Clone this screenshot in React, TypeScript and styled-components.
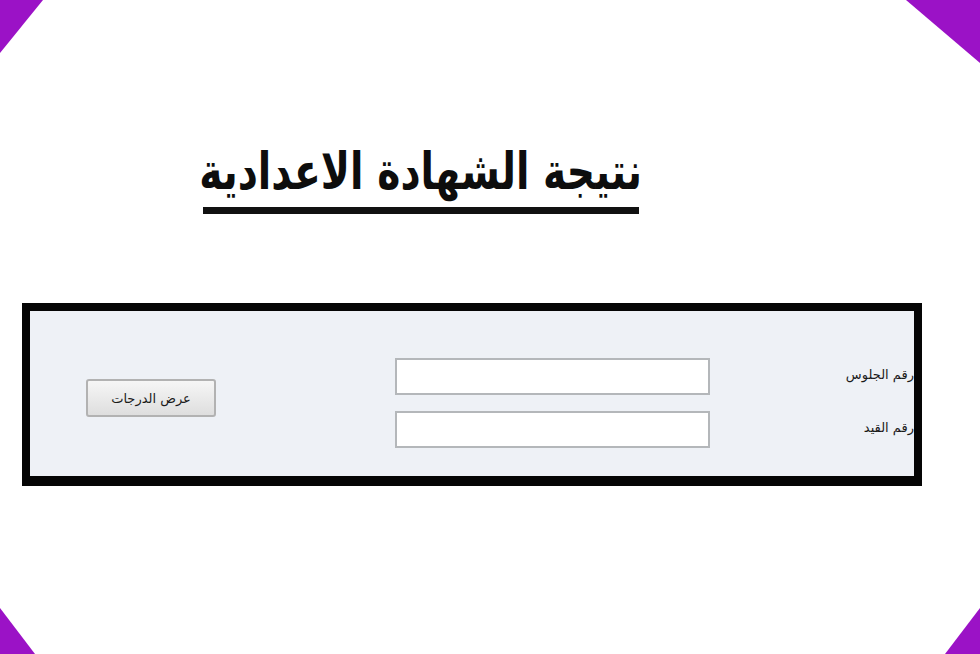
import React from "react";
import styled, { createGlobalStyle } from "styled-components";

const GlobalStyle = createGlobalStyle`
  html, body {
    margin: 0;
    padding: 0;
    background: #ffffff;
  }
  body {
    font-family: "DejaVu Sans", "Noto Sans", sans-serif;
  }
`;

export default function App() {
  return (
    <>
      <GlobalStyle />
      <Page>
        <Corner $pos="tl" />
        <Corner $pos="tr" />
        <Corner $pos="bl" />
        <Corner $pos="br" />

        <TitleRow>
          <Title dir="rtl">
            <TitleText>نتيجة الشهادة الاعدادية</TitleText>
          </Title>
        </TitleRow>

        <Box dir="rtl">
          <Fields>
            <Label>رقم الجلوس</Label>
            <Input type="text" />
            <Label>رقم القيد</Label>
            <Input type="text" />
          </Fields>
          <Button type="button">عرض الدرجات</Button>
        </Box>
      </Page>
    </>
  );
}

const Page = styled.div`
  position: relative;
  width: 980px;
  height: 654px;
  overflow: hidden;
  background: #ffffff;
  padding-top: 137px;
  box-sizing: border-box;
`;

const corners = {
  tl: "top: 0; left: 0; width: 43px; height: 53px; clip-path: polygon(0 0, 100% 0, 0 100%);",
  tr: "top: 0; right: 0; width: 74px; height: 63px; clip-path: polygon(0 0, 100% 0, 100% 100%);",
  bl: "bottom: 0; left: 0; width: 35px; height: 46px; clip-path: polygon(0 0, 100% 100%, 0 100%);",
  br: "bottom: 0; right: 0; width: 35px; height: 46px; clip-path: polygon(100% 0, 100% 100%, 0 100%);",
};

const Corner = styled.div<{ $pos: keyof typeof corners }>`
  position: absolute;
  background: #9b12c6;
  ${(p) => corners[p.$pos]}
`;

const TitleRow = styled.div`
  padding-left: 203px;
  height: 166px;
`;

const Title = styled.h1`
  display: flex;
  justify-content: center;
  margin: 0;
  width: 436px;
  height: 70px;
  border-bottom: 7px solid #111111;
  white-space: nowrap;
`;

const TitleText = styled.span`
  display: inline-block;
  font-family: "DejaVu Sans", sans-serif;
  font-size: 51px;
  font-weight: bold;
  line-height: 70px;
  color: #0d0d0d;
  transform: scaleX(0.77);
`;

const Box = styled.div`
  margin-left: 22px;
  width: 900px;
  height: 183px;
  box-sizing: border-box;
  border: 8px solid #050505;
  border-bottom-width: 10px;
  background: #eef1f6;
  display: flex;
  align-items: flex-start;
  padding: 47px 0 0 56px;
`;

const Fields = styled.div`
  display: grid;
  grid-template-columns: 204px 315px;
  row-gap: 16px;
  align-items: center;
`;

const Label = styled.span`
  font-family: "DejaVu Sans", sans-serif;
  font-size: 13px;
  color: #1a1a1a;
  text-align: right;
  padding-bottom: 4px;
`;

const Input = styled.input`
  width: 315px;
  height: 37px;
  box-sizing: border-box;
  border: 2px solid #b4b7ba;
  background: #ffffff;
  margin: 0;
`;

const Button = styled.button`
  margin-right: auto;
  margin-top: 21px;
  width: 130px;
  height: 38px;
  border: 2px solid #b2b2b2;
  border-radius: 3px;
  background: linear-gradient(#f6f6f6, #dedede);
  font-family: "DejaVu Sans", sans-serif;
  font-size: 13px;
  color: #1a1a1a;
  padding: 0;
`;
